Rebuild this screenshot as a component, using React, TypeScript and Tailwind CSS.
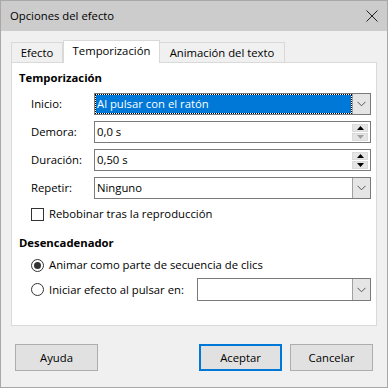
import React from "react";

const font = { fontFamily: '"Segoe UI", "Open Sans", "Noto Sans", sans-serif' };

function Chevron() {
  return (
    <svg width="9" height="6" viewBox="0 0 9 6">
      <path d="M0.5 0.8 L4.5 4.8 L8.5 0.8" fill="none" stroke="#555" strokeWidth="1" />
    </svg>
  );
}

function DropBtn() {
  return (
    <div className="w-[18px] h-full flex items-center justify-center bg-[#e5e5e5] border-l border-[#a0a0a0]">
      <Chevron />
    </div>
  );
}

function Spin({ downDisabled }: { downDisabled?: boolean }) {
  return (
    <div className="flex flex-col gap-[1px] pr-[2px] py-[2px]">
      <div className="w-[16px] h-[8px] bg-[#e5e5e5] border border-[#dadada] flex items-center justify-center">
        <svg width="7" height="4" viewBox="0 0 7 4"><path d="M0 4 L3.5 0 L7 4 Z" fill="#000" /></svg>
      </div>
      <div className="w-[16px] h-[8px] bg-[#e5e5e5] border border-[#dadada] flex items-center justify-center">
        <svg width="7" height="4" viewBox="0 0 7 4"><path d="M0 0 L3.5 4 L7 0 Z" fill={downDisabled ? "#a0a0a0" : "#000"} /></svg>
      </div>
    </div>
  );
}

function Row({ label, children }: { label: string; children: React.ReactNode }) {
  return (
    <div className="flex items-center h-[22px]">
      <div className="w-[75px] pl-[12px]">{label}</div>
      <div className="w-[277px] h-full">{children}</div>
    </div>
  );
}

export default function App() {
  return (
    <div style={font} className="w-[388px] h-[388px] bg-[#f0f0f0] border border-[#a8a8a8] flex flex-col text-[#000] text-[11.3px] leading-[16px]">
      <div className="h-[30px] bg-[#cccccc] flex items-center justify-between pl-[9px] pr-[5px]">
        <span>Opciones del efecto</span>
        <svg width="12" height="12" viewBox="0 0 12 12" className="mr-[4px]">
          <path d="M0.5 0.5 L11.5 11.5 M11.5 0.5 L0.5 11.5" stroke="#222" strokeWidth="1" />
        </svg>
      </div>
      <div className="flex flex-col px-[10px] pt-[9px]">
        <div className="flex items-end h-[22px] relative z-10">
          <div className="h-[20px] w-[52px] border border-b-0 border-[#d9d9d9] bg-[#f0f0f0] flex items-center justify-center">Efecto</div>
          <div className="h-[23px] w-[97px] border border-b-0 border-[#d9d9d9] bg-white flex items-center justify-center -mb-[1px] pb-[3px]">Temporización</div>
          <div className="h-[20px] w-[125px] border border-b-0 border-l-0 border-[#d9d9d9] bg-[#f0f0f0] flex items-center justify-center">Animación del texto</div>
        </div>
        <div className="h-[264px] w-[366px] bg-white border border-[#d9d9d9] flex flex-col pl-[7px] pt-[7px]">
          <div className="font-bold">Temporización</div>
          <div className="flex flex-col gap-[6px] mt-[7px]">
            <Row label="Inicio:">
              <div className="h-full flex border border-[#7a7a7a]">
                <div className="flex-1 m-[1px] bg-[#0078d7] text-white flex items-center pl-[1px] outline outline-1 outline-dotted outline-[#000]">Al pulsar con el ratón</div>
                <DropBtn />
              </div>
            </Row>
            <Row label="Demora:">
              <div className="h-full flex border border-[#7a7a7a] bg-white items-center">
                <div className="flex-1 pl-[2px]">0,0 s</div>
                <Spin downDisabled />
              </div>
            </Row>
            <Row label="Duración:">
              <div className="h-full flex border border-[#7a7a7a] bg-white items-center">
                <div className="flex-1 pl-[2px]">0,50 s</div>
                <Spin />
              </div>
            </Row>
            <Row label="Repetir:">
              <div className="h-full flex border border-[#7a7a7a] bg-white">
                <div className="flex-1 flex items-center pl-[2px]">Ninguno</div>
                <DropBtn />
              </div>
            </Row>
          </div>
          <div className="flex items-center mt-[7px] pl-[12px] gap-[5px]">
            <div className="w-[13px] h-[13px] border border-[#333] bg-white" />
            <span>Rebobinar tras la reproducción</span>
          </div>
          <div className="font-bold mt-[13px]">Desencadenador</div>
          <div className="flex items-center mt-[6px] pl-[12px] gap-[5px]">
            <div className="w-[13px] h-[13px] rounded-full border border-[#333] bg-white flex items-center justify-center">
              <div className="w-[7px] h-[7px] rounded-full bg-[#333]" />
            </div>
            <span>Animar como parte de secuencia de clics</span>
          </div>
          <div className="flex items-center mt-[5px] pl-[12px] h-[23px]">
            <div className="w-[13px] h-[13px] rounded-full border border-[#333] bg-white" />
            <span className="ml-[5px] w-[148px]">Iniciar efecto al pulsar en:</span>
            <div className="w-[174px] h-full flex border border-[#7a7a7a] bg-white">
              <div className="flex-1" />
              <DropBtn />
            </div>
          </div>
        </div>
        <div className="flex mt-[18px] pl-[4px] pr-[4px] h-[27px]">
          <div className="w-[83px] h-full border border-[#adadad] bg-[#e1e1e1] flex items-center justify-center">Ayuda</div>
          <div className="flex-1" />
          <div className="w-[83px] h-full border-2 border-[#0078d7] bg-[#e1e1e1] flex items-center justify-center">Aceptar</div>
          <div className="w-[83px] h-full border border-[#adadad] bg-[#e1e1e1] flex items-center justify-center ml-[8px]">Cancelar</div>
        </div>
      </div>
    </div>
  );
}
